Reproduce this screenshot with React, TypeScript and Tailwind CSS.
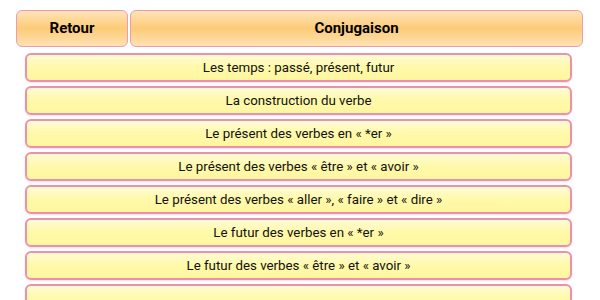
import React from 'react';

const lessons = [
  'Les temps : passé, présent, futur',
  'La construction du verbe',
  'Le présent des verbes en « *er »',
  'Le présent des verbes « être » et « avoir »',
  'Le présent des verbes « aller », « faire » et « dire »',
  'Le futur des verbes en « *er »',
  'Le futur des verbes « être » et « avoir »',
  '', // next row, scrolled below the fold
];

const headerCls =
  'h-[37px] flex items-center justify-center rounded-[6px] border-[1.5px] border-[#eb9cb0] bg-[linear-gradient(to_bottom,#fee3b8_0%,#fdcb78_50%,#fee2b4_100%)] text-[15px] font-bold text-black';

export default function App() {
  return (
    <main className="w-[600px] h-[300px] overflow-hidden bg-white font-['Roboto',sans-serif]">
      {/* top bar */}
      <div className="flex gap-[2px] pl-[16px] pr-[17px] pt-[10px]">
        <button className={`${headerCls} w-[112px]`}>Retour</button>
        <div className={`${headerCls} flex-1`}>Conjugaison</div>
      </div>

      {/* lesson list */}
      <div className="flex flex-col gap-[4px] pl-[25px] pr-[28px] pt-[6px]">
        {lessons.map((l, i) => (
          <div
            key={i}
            className="h-[29px] shrink-0 flex items-center justify-center rounded-[6px] border-2 border-[#e993ab] bg-[linear-gradient(to_bottom,#fffbd6_0%,#fff9a8_50%,#fff6a0_100%)] text-[13.3px] text-[#111] shadow-[0_1px_2px_rgba(220,150,200,0.35)]"
          >
            {l}
          </div>
        ))}
      </div>
    </main>
  );
}
